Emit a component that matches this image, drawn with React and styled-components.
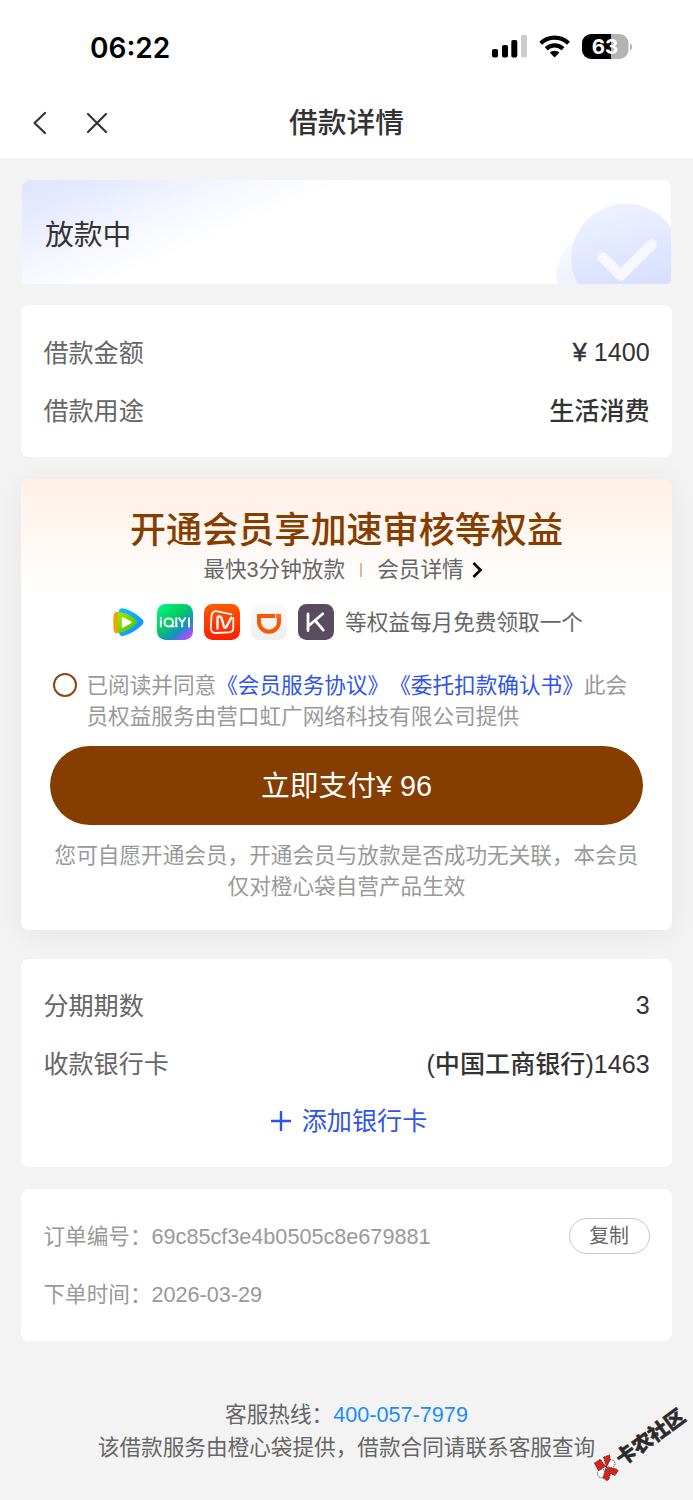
import styled, { createGlobalStyle } from 'styled-components';

const GlobalStyle = createGlobalStyle`
  * {
    box-sizing: border-box;
  }

  body {
    margin: 0;
    background-color: #f3f3f3;
    font-family: "Liberation Sans", "Noto Sans CJK SC", sans-serif;
    color: #333;
    text-spacing-trim: space-all;
  }
`

const Page = styled.div`
  width: 693px;
  height: 1500px;
  overflow: hidden;
  position: relative;
`

// status bar + nav bar
const StatusBar = styled.div`
  height: 94px;
  padding: 0 61px 0 90px;
  display: flex;
  justify-content: space-between;
  align-items: center;
  background-color: #fff;
`

const Time = styled.span`
  font-family: Inter, sans-serif;
  font-weight: 600;
  font-size: 28px;
  line-height: 32px;
  padding-top: 1px;
  color: #000;
`

const NavBar = styled.header`
  height: 64px;
  display: grid;
  grid-template-columns: 200px 1fr 200px;
  align-items: center;
  background-color: #fff;
  padding-bottom: 6px;
`

const NavIcons = styled.div`
  display: flex;
  align-items: center;
  padding-left: 30px;
  gap: 36px;
`

const NavTitle = styled.h1`
  margin: 0;
  text-align: center;
  font-weight: 500;
  font-size: 28.8px;
  line-height: 40px;
`

const Content = styled.main`
  padding: 22px 21.4px 0;
  display: flex;
  flex-direction: column;
`

// loan state banner
const Banner = styled.section`
  height: 104px;
  margin: 0 0.4px 21px 0.6px;
  padding-left: 23px;
  display: flex;
  justify-content: space-between;
  align-items: center;
  border-radius: 8px 8px 4px 4px;
  overflow: hidden;
  background: linear-gradient(157deg, #dfe5ff 0%, #e5eaff 10%, #f5f7ff 24%, #fff 37%);
  font-size: 28.8px;

  & > span {
    line-height: 40px;
    padding-top: 6px;
  }
`

const Card = styled.section`
  background-color: #fff;
  border-radius: 8px;
  padding: ${(props) => props.$top || 18}px 22px 0;
  height: ${(props) => props.$height}px;
  margin-bottom: 22px;
`

const Row = styled.div`
  height: 57.7px;
  display: flex;
  justify-content: ${(props) => (props.$center ? 'center' : 'space-between')};
  align-items: center;
  gap: 11px;
  padding-left: ${(props) => (props.$center ? 5 : 0)}px;
  font-size: 25.1px;
  line-height: 36px;
`

const Label = styled.span`
  color: #666;
`

const Value = styled.span`
  color: #333;
  font-weight: 500;
`

const NumberValue = styled(Value)`
  padding-bottom: 2px;
`

const Currency = styled.span`
  -webkit-text-stroke: 0.5px #333;
`

const AddLink = styled.a`
  color: #3054eb;
`

// membership card
const VipCard = styled.section`
  height: 451px;
  margin-bottom: 29px;
  padding: 30px 29px 0;
  display: flex;
  flex-direction: column;
  border-radius: 8px;
  background: linear-gradient(180deg, #fff0e6 0px, #fff 116px);
  box-shadow: 0 4px 32px rgba(0, 0, 0, 0.06);
  font-size: 21.63px;
  color: #666;
`

const VipTitle = styled.h2`
  margin: 0;
  font-weight: 500;
  font-size: 36.1px;
  line-height: 44px;
  text-align: center;
  color: #853d00;
`

const VipSub = styled.div`
  height: 34px;
  display: flex;
  justify-content: center;
  align-items: center;
  padding-right: 6px;
  line-height: 30px;
`

const Divider = styled.i`
  width: 2px;
  height: 14px;
  margin: 0 15px;
  background-color: #d9b79c;
`

const Benefits = styled.div`
  margin-top: 17px;
  height: 36px;
  display: flex;
  justify-content: center;
  align-items: center;
  gap: 11px;
  line-height: 30px;

  & > span {
    padding-top: 2px;
  }
`

const Agreement = styled.div`
  margin-top: 30px;
  display: flex;
  align-items: flex-start;
  color: #999;
  line-height: 31px;
`

const Radio = styled.span`
  flex: none;
  width: 24px;
  height: 24px;
  margin: 3px 9px 0 3px;
  border: 2px solid #8f4614;
  border-radius: 50%;
`

const AgreementText = styled.p`
  margin: 0;
  width: 545px;

  & > a {
    color: #3054eb;
  }
`

const PayButton = styled.button`
  flex: none;
  margin-top: 14px;
  height: 79px;
  padding: 0 0 4px;
  border: 0;
  border-radius: 40px;
  background-color: #853d00;
  color: #fff;
  font-family: inherit;
  font-size: 28.8px;
  cursor: pointer;
`

const Tips = styled.p`
  margin: 15px -6px 0;
  text-align: center;
  color: #999;
  line-height: 31px;
`

// order info
const OrderText = styled.span`
  color: #999;
  font-size: 21.63px;
  padding-top: 2px;
`

const CopyButton = styled.button`
  width: 81px;
  height: 36px;
  padding: 0;
  border: 1px solid #c8c8c8;
  border-radius: 18px;
  background-color: #fff;
  color: #666;
  font-family: inherit;
  font-size: 19.9px;
  line-height: 30px;
`

const Footer = styled.footer`
  margin-top: 35px;
  text-align: center;
  font-size: 21.63px;
  line-height: 33px;
  color: #666;

  & > a {
    color: #1a8dff;
  }
`

// community stamp over the page corner
const Stamp = styled.div`
  position: absolute;
  left: 584px;
  top: 1430px;
  display: flex;
  align-items: center;
  transform: rotate(-36deg);
  white-space: nowrap;
  font-weight: 900;
  font-size: 20px;
  line-height: 24px;
  color: #2b2b2b;
  -webkit-text-stroke: 0.4px #2b2b2b;

  & > svg {
    flex: none;
    transform: rotate(36deg);
  }

  & > span {
    padding-top: 4px;
  }
`

const SignalIcon = () => (
  <svg width="141" height="30" viewBox="491 32 141 30">
    <rect x="492" y="49" width="6" height="8.5" rx="1.8" />
    <rect x="502" y="45" width="6" height="12.5" rx="1.8" />
    <rect x="511.3" y="40" width="6" height="17.5" rx="1.8" />
    <rect x="521" y="35" width="6" height="22.5" rx="1.8" fill="#ccc" />
    <g fill="none" stroke="#000" strokeWidth="4.2">
      <path d="M540.7 43.2a20 20 0 0 1 27.8 0" />
      <path d="M546.2 48.8a12 12 0 0 1 16.8 0" />
    </g>
    <path d="M554.6 57.6l-4.9-5a7.2 7.2 0 0 1 9.8 0z" />
    <path d="M591 34h20v25h-20a9 9 0 0 1-9-9v-7a9 9 0 0 1 9-9z" />
    <path d="M611 34h8.5a9 9 0 0 1 9 9v7a9 9 0 0 1-9 9H611z" fill="#b3b3b3" />
    <path d="M630 43.2c2.7 1 2.7 6.2 0 7.2z" fill="#b3b3b3" />
    <text x="605" y="54" textAnchor="middle" fontFamily="Inter, sans-serif" fontWeight="700" fontSize="20.5" fill="#fff">63</text>
  </svg>
)

const BackIcon = () => (
  <svg width="18" height="26" viewBox="0 0 18 26" fill="none" stroke="#333" strokeWidth="2.2" strokeLinecap="round" strokeLinejoin="round">
    <path d="M15 3L4.5 13L15 23" />
  </svg>
)

const CloseIcon = () => (
  <svg width="26" height="26" viewBox="0 0 26 26" fill="none" stroke="#333" strokeWidth="2.2" strokeLinecap="round">
    <path d="M4 4l18 18M22 4L4 22" />
  </svg>
)

const SuccessMark = () => (
  <svg width="130" height="104" viewBox="0 0 130 104">
    <defs>
      <linearGradient id="mark" x1="0.35" y1="0" x2="0.6" y2="1">
        <stop offset="0" stopColor="#eef2ff" />
        <stop offset="0.75" stopColor="#d9e0ff" />
      </linearGradient>
      <linearGradient id="markBack" x1="0" y1="0" x2="0" y2="1">
        <stop offset="0" stopColor="#fafbff" />
        <stop offset="1" stopColor="#e8edff" />
      </linearGradient>
    </defs>
    <circle cx="57" cy="95" r="41.5" fill="url(#markBack)" />
    <circle cx="85" cy="78.5" r="54.7" fill="url(#mark)" />
    <path d="M62 77.5L79.7 95.5L110.7 64.5" fill="none" stroke="#f7f8ff" strokeWidth="10.5" strokeLinecap="round" strokeLinejoin="round" />
  </svg>
)

const Arrow = styled.svg`
  margin-left: 8px;
`

const ArrowIcon = () => (
  <Arrow width="12" height="18" viewBox="0 0 12 18" fill="none" stroke="#000" strokeWidth="2.6">
    <path d="M1.5 2L8.5 9L1.5 16" />
  </Arrow>
)

const TencentIcon = () => (
  <svg width="36" height="36" viewBox="0 0 36 36">
    <defs>
      <linearGradient id="txGreen" x1="0" y1="0" x2="1" y2="1">
        <stop offset="0" stopColor="#b0e400" />
        <stop offset="1" stopColor="#3fc400" />
      </linearGradient>
      <linearGradient id="txBlue" x1="0" y1="0" x2="1" y2="1">
        <stop offset="0" stopColor="#00c8ff" />
        <stop offset="1" stopColor="#1787ff" />
      </linearGradient>
    </defs>
    <path d="M6.5 8C4 8 3.3 11 3.3 18s.7 11 3 11.500l6-2V8z" fill="#ff9a00" />
    <path d="M9 6.500c1-2.500 3.500-2.500 6-1.700c7 2.500 13 6 17 10.200c2 2 2 4 0 6c-4 4.300-10 8-17 10.600c-3 1-5 .3-6-2.100z" fill="url(#txBlue)" />
    <path d="M8 9.500c1-2 3.500-1.500 6.500-.4c5 2 8.500 4 11.500 7c1.400 1.400 1.400 2.600 0 4c-3.300 3.200-7 5.700-12 7.600c-3 1.100-5.300 1-6 0C6.500 23 6.500 14 8 9.500z" fill="url(#txGreen)" />
    <path d="M12.800 13l8.300 4.600c.8.500.8 1.200 0 1.600l-8.300 4.500c-.6.300-1 0-1-.7v-9.300c0-.7.400-1 1-.7z" fill="#fff" />
  </svg>
)

const IqiyiIcon = () => (
  <svg width="36" height="36" viewBox="0 0 36 36">
    <defs>
      <linearGradient id="iqiyi" x1="0.1" y1="0" x2="0.95" y2="1">
        <stop offset="0" stopColor="#00f58c" />
        <stop offset="0.38" stopColor="#00d05e" />
        <stop offset="0.7" stopColor="#168fc5" />
        <stop offset="0.83" stopColor="#7a62ed" />
        <stop offset="1" stopColor="#e03cff" />
      </linearGradient>
    </defs>
    <rect width="36" height="36" rx="8.5" fill="url(#iqiyi)" />
    <g fill="none" stroke="#fff" strokeWidth="2">
      <path d="M3.900 15.800v7.500M19.300 13.500v9.800M32 13.500v9.800M21.600 13.500l3.500 5v4.800M28.600 13.500l-3.500 5" />
      <rect x="7.6" y="14.4" width="8.3" height="8" rx="3.7" />
      <path d="M13.500 22.300h3.800" />
    </g>
    <circle cx="3.9" cy="13.9" r="1.2" fill="#fff" />
  </svg>
)

const MangoIcon = () => (
  <svg width="36" height="36" viewBox="0 0 36 36">
    <defs>
      <linearGradient id="mango" x1="0" y1="0" x2="0" y2="1">
        <stop offset="0" stopColor="#ff5a00" />
        <stop offset="1" stopColor="#ff1e00" />
      </linearGradient>
    </defs>
    <rect width="36" height="36" rx="8.5" fill="url(#mango)" />
    <path d="M27.500 10.300L13.500 7.300C9.500 6.800 7.800 8.500 7.500 12l-.7 11.800c0 3.500 1.400 5.200 4.700 5.200l13.500-.7c3 0 4.300-1.500 4.300-4.300V14" fill="none" stroke="#fff" strokeWidth="1.800" strokeLinecap="round" />
    <path d="M13.500 25.500V12.500" fill="none" stroke="#fff" strokeWidth="2.4" />
    <path d="M13.500 12.500h1.800c1.400 0 2.100.9 2.500 2.200l2.200 8c.5 1.500 1.600 1.500 2.300.2l5.500-10" fill="none" stroke="#fff" strokeWidth="2.3" strokeLinejoin="round" />
  </svg>
)

const DidiIcon = () => (
  <svg width="36" height="36" viewBox="0 0 36 36">
    <defs>
      <linearGradient id="didi" x1="0" y1="0" x2="0" y2="1">
        <stop offset="0" stopColor="#fbfbfb" />
        <stop offset="1" stopColor="#efefef" />
      </linearGradient>
    </defs>
    <rect width="36" height="36" rx="8.5" fill="url(#didi)" />
    <path d="M24 11.900H8v5.800a10 10 0 0 0 20 0V14" fill="none" stroke="#ff5500" strokeWidth="4" />
    <path d="M24.800 9.900H30v4.300h-5.200z" fill="#ff6a1e" />
  </svg>
)

const KeepIcon = () => (
  <svg width="36" height="36" viewBox="0 0 36 36">
    <rect width="36" height="36" rx="8.5" fill="#594c5e" />
    <path d="M10 10v16.500M11 21.500L24.800 9.700M17.500 16.800l7.800 9.400" fill="none" stroke="#fff" strokeWidth="2.8" strokeLinecap="round" />
  </svg>
)

const PlusIcon = () => (
  <svg width="20" height="20" viewBox="0 0 20 20" stroke="#3054eb" strokeWidth="2.4">
    <path d="M10 0v20M0 10h20" />
  </svg>
)

const StampIcon = () => (
  <svg width="28" height="28" viewBox="0 0 28 28">
    <g stroke="#111" strokeWidth="0.7" strokeDasharray="1.6 1">
      <circle cx="19.7" cy="10.2" r="3.8" fill="#fff" />
      <circle cx="10" cy="20" r="4.2" fill="#fff" />
      <path d="M2.700 9.700L8.700 5.700L14 13L6.700 17z" fill="#df2017" />
      <path d="M12 3.700L18 1.300L18.700 6.300L14.700 13.700z" fill="#df2017" />
      <path d="M14.300 13.700L24.300 15.300L26.700 17L23.300 22L18.500 20z" fill="#df2017" />
      <path d="M14 15L18.700 20.300L17.300 25.700L15.300 27.300L11.300 24.300z" fill="#df2017" />
    </g>
  </svg>
)

export default function App() {
  return (
    <Page>
      <GlobalStyle />
      <StatusBar>
        <Time>06:22</Time>
        <SignalIcon />
      </StatusBar>
      <NavBar>
        <NavIcons>
          <BackIcon />
          <CloseIcon />
        </NavIcons>
        <NavTitle>借款详情</NavTitle>
      </NavBar>
      <Content>
        <Banner>
          <span>放款中</span>
          <SuccessMark />
        </Banner>
        <Card $height={152} $top={19}>
          <Row>
            <Label>借款金额</Label>
            <NumberValue><Currency>¥</Currency> 1400</NumberValue>
          </Row>
          <Row>
            <Label>借款用途</Label>
            <Value>生活消费</Value>
          </Row>
        </Card>
        <VipCard>
          <VipTitle>开通会员享加速审核等权益</VipTitle>
          <VipSub>
            最快3分钟放款
            <Divider />
            会员详情
            <ArrowIcon />
          </VipSub>
          <Benefits>
            <TencentIcon />
            <IqiyiIcon />
            <MangoIcon />
            <DidiIcon />
            <KeepIcon />
            <span>等权益每月免费领取一个</span>
          </Benefits>
          <Agreement>
            <Radio />
            <AgreementText>
              已阅读并同意<a>《会员服务协议》</a><a>《委托扣款确认书》</a>此会员权益服务由营口虹广网络科技有限公司提供
            </AgreementText>
          </Agreement>
          <PayButton>立即支付¥ 96</PayButton>
          <Tips>您可自愿开通会员，开通会员与放款是否成功无关联，本会员仅对橙心袋自营产品生效</Tips>
        </VipCard>
        <Card $height={208}>
          <Row>
            <Label>分期期数</Label>
            <NumberValue>3</NumberValue>
          </Row>
          <Row>
            <Label>收款银行卡</Label>
            <Value>(中国工商银行)1463</Value>
          </Row>
          <Row $center>
            <PlusIcon />
            <AddLink>添加银行卡</AddLink>
          </Row>
        </Card>
        <Card $height={152}>
          <Row>
            <OrderText>订单编号：69c85cf3e4b0505c8e679881</OrderText>
            <CopyButton>复制</CopyButton>
          </Row>
          <Row>
            <OrderText>下单时间：2026-03-29</OrderText>
          </Row>
        </Card>
        <Footer>
          客服热线：<a>400-057-7979</a>
          <br />
          该借款服务由橙心袋提供，借款合同请联系客服查询
        </Footer>
      </Content>
      <Stamp>
        <StampIcon />
        <span>卡农社区</span>
      </Stamp>
    </Page>
  );
}
